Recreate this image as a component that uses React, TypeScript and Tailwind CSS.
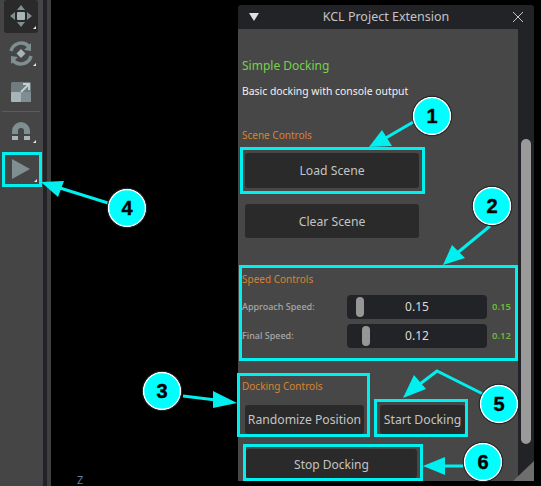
const font = { fontFamily: '"Noto Sans", "Open Sans", sans-serif' };

function Corner() {
  return <polygon points="29,29 32,29 32,26" fill="#e8e8e8" />;
}

function MoveIcon() {
  return (
    <svg width="34" height="33" viewBox="0 0 34 33">
      <rect x="13" y="12" width="8" height="8" rx="1" fill="#a6b5b7" />
      <polygon points="17,5 13,10 21,10" fill="#7f8e90" />
      <polygon points="17,27 13,22 21,22" fill="#7f8e90" />
      <polygon points="6,16 11,12 11,20" fill="#7f8e90" />
      <polygon points="28,16 23,12 23,20" fill="#7f8e90" />
      <Corner />
    </svg>
  );
}

function RotateIcon() {
  return (
    <svg width="34" height="33" viewBox="0 0 34 33">
      <path d="M7 14 A10.500 10.500 0 0 1 25 9.500" fill="none" stroke="#7f8e90" strokeWidth="3.500" />
      <polygon points="27,6 27,14 20,13" fill="#7f8e90" />
      <path d="M27 19 A10.500 10.500 0 0 1 9 23.500" fill="none" stroke="#7f8e90" strokeWidth="3.500" />
      <polygon points="7,27 7,19 14,20" fill="#7f8e90" />
      <polygon points="17,12 21.500,16.500 17,21 12.500,16.500" fill="#a6b5b7" />
      <Corner />
    </svg>
  );
}

function ScaleIcon() {
  return (
    <svg width="34" height="33" viewBox="0 0 34 33">
      <rect x="7" y="7" width="20" height="20" rx="1.500" fill="#6f7d80" />
      <rect x="7" y="17" width="10" height="10" rx="1" fill="#a6b5b7" />
      <rect x="17" y="17" width="10" height="10" fill="#7f8e90" />
      <path d="M17 17 L25 9 M19 9 H25 V15" fill="none" stroke="#c5d0d2" strokeWidth="1.800" />
    </svg>
  );
}

function MagnetIcon() {
  return (
    <svg width="34" height="33" viewBox="0 0 34 33">
      <path d="M8 20 V17 A9 9 0 0 1 26 17 V20 H20 V17 A3 3 0 0 0 14 17 V20 Z" fill="#7f8e90" />
      <rect x="8" y="22" width="6" height="4" fill="#a6b5b7" />
      <rect x="20" y="22" width="6" height="4" fill="#a6b5b7" />
      <Corner />
    </svg>
  );
}

function PlayIcon() {
  return (
    <svg width="34" height="29" viewBox="0 0 34 29">
      <polygon points="7,4 7,24 25,14" fill="#7f8e90" />
      <polygon points="29,27 32,27 32,24" fill="#e8e8e8" />
    </svg>
  );
}

function Toolbar() {
  return (
    <div className="flex flex-col w-[43px] shrink-0 bg-[#454545] pl-[4px]">
      <div className="w-[34px] h-[33px] rounded-[3px] bg-[#2a2a2a]">
        <MoveIcon />
      </div>
      <div className="mt-[4px] h-[33px]">
        <RotateIcon />
      </div>
      <div className="mt-[5px] h-[33px]">
        <ScaleIcon />
      </div>
      <div className="mt-[3px] -ml-[2px] w-[38px] h-px bg-[#5c5c5c]" />
      <div className="mt-[2px] h-[33px]">
        <MagnetIcon />
      </div>
      <div className="mt-[5px] -ml-[2px] w-[40px] h-[35px] border-[3px] border-[#00f0f0]">
        <PlayIcon />
      </div>
    </div>
  );
}

function DarkButton({ label, className }: { label: string; className: string }) {
  return (
    <div className={`flex items-center justify-center rounded-[3px] bg-[#2a2a2a] text-[#c4c4c4] ${className}`}>
      {label}
    </div>
  );
}

function SpeedRow({ label, value, handle }: { label: string; value: string; handle: string }) {
  return (
    <div className="flex items-center h-[24px]">
      <div className="w-[105px] text-[9px] font-medium text-[#a8a8a8]">{label}</div>
      <div className="relative flex items-center justify-center w-[140px] h-[24px] rounded-[4px] bg-[#222326] text-[12px] text-[#dcdcdc]">
        <div className={`absolute top-[2px] w-[8px] h-[20px] rounded-[4px] bg-[#969696] ${handle}`} />
        {value}
      </div>
      <div className="ml-[5px] text-[9.500px] font-semibold text-[#6cb83a]">{value}</div>
    </div>
  );
}

function Panel() {
  return (
    <div className="flex flex-col w-[296px] h-[476px] rounded-t-[3px] bg-[#222326]">
      <div className="relative flex items-center justify-center h-[24px] shrink-0 text-[12.500px] text-[#c4c4c4]">
        <svg className="absolute left-[11px] top-[8px]" width="10" height="8" viewBox="0 0 10 8">
          <polygon points="0,0 10,0 5,8" fill="#e0e0e0" />
        </svg>
        KCL Project Extension
        <svg className="absolute right-[11px] top-[7px]" width="10" height="10" viewBox="0 0 10 10">
          <path d="M0 0 L10 10 M10 0 L0 10" stroke="#c4c4c4" strokeWidth="1" />
        </svg>
      </div>
      <div className="relative flex flex-1">
        <div className="flex flex-col w-[280px] bg-[#474747]">
          <div className="mt-[28px] ml-[4px] h-[18px] leading-[18px] text-[12px] text-[#76d24a]">Simple Docking</div>
          <div className="mt-[9px] ml-[4px] h-[14px] leading-[14px] text-[10.400px] text-[#f2f2f2]">Basic docking with console output</div>
          <div className="mt-[30px] ml-[4px] h-[14px] leading-[14px] text-[10px] text-[#d9832e]">Scene Controls</div>
          <div className="mt-[5px] ml-[2px] w-[185px] h-[47px] border-[3px] border-[#00f0f0] pl-[2px] pt-[3px]">
            <DarkButton label="Load Scene" className="w-[174px] h-[35px] pt-[2px] text-[12.200px]" />
          </div>
          <DarkButton label="Clear Scene" className="mt-[10px] ml-[7px] w-[174px] h-[34px] pt-[3px] text-[12.200px]" />
          <div className="flex flex-col mt-[27px] ml-[1px] w-[279px] h-[96px] border-[3px] border-[#00f0f0]">
            <div className="mt-[4px] h-[14px] leading-[14px] text-[10px] text-[#d9832e]">Speed Controls</div>
            <div className="flex flex-col mt-[9px] gap-[5px]">
              <SpeedRow label="Approach Speed:" value="0.15" handle="left-[9px]" />
              <SpeedRow label="Final Speed:" value="0.12" handle="left-[15px]" />
            </div>
          </div>
          <div className="flex items-end mt-[12px] -ml-[1px]">
            <div className="flex flex-col w-[133px] h-[64px] border-[3px] border-[#00f0f0] pl-[5px]">
              <div className="mt-[3px] -ml-[3px] h-[14px] leading-[14px] text-[10px] text-[#d9832e]">Docking Controls</div>
              <DarkButton label="Randomize Position" className="mt-[12px] w-[119px] h-[29px] pt-[2px] text-[12.200px]" />
            </div>
            <div className="ml-[4px] w-[94px] h-[38px] border-[3px] border-[#00f0f0] pl-[3px] pt-[3px]">
              <DarkButton label="Start Docking" className="w-[85px] h-[29px] pt-[2px] text-[12.200px]" />
            </div>
          </div>
          <div className="mt-[7px] ml-[5px] w-[180px] h-[37px] border-[3px] border-[#00f0f0] pt-[2px]">
            <DarkButton label="Stop Docking" className="w-[171px] h-[29px] pt-[2px] text-[12px]" />
          </div>
        </div>
        <div className="flex-1 pl-[3px] pt-[110px]">
          <div className="w-[10px] h-[305px] rounded-[5px] bg-[#9a9a9a]" />
        </div>
        <svg className="absolute right-0 bottom-0" width="21" height="20" viewBox="0 0 21 20">
          <polygon points="21,0 21,20 0,20" fill="#6e6e6e" />
        </svg>
      </div>
    </div>
  );
}

function Callout({ n, x, y }: { n: string; x: number; y: number }) {
  return (
    <g>
      <circle cx={x} cy={y} r="18.500" fill="#00ffff" stroke="#ffffff" strokeWidth="1.500" />
      <circle cx={x} cy={y} r="19.800" fill="none" stroke="#222222" strokeWidth="1" />
      <text
        x={x}
        y={y + 7}
        textAnchor="middle"
        fontSize="20"
        fontWeight="700"
        fill="#000000"
        stroke="#000000"
        strokeWidth="0.400"
        fontFamily='"Liberation Sans", sans-serif'
      >
        {n}
      </text>
    </g>
  );
}

function Annotations() {
  return (
    <svg className="absolute left-0 top-0" width="541" height="486" viewBox="0 0 541 486">
      <g stroke="#00f0f0" strokeWidth="3" fill="none">
        <path d="M415 121 L384 139" />
        <path d="M490 226 L456 254" />
        <path d="M183 396 L216 400" />
        <path d="M108 203 L60 188" />
        <path d="M483 394 L437 371 L416 387" />
        <path d="M463 466 L441 466" />
      </g>
      <g fill="#00f0f0">
        <polygon points="369,147 392,146 382,130" />
        <polygon points="443,265 465,258 452,245" />
        <polygon points="237,403 213,391 213,408" />
        <polygon points="41,182 58,197 64,181" />
        <polygon points="403,398 426,389 414,375" />
        <polygon points="423,466 445,457 445,475" />
      </g>
      <Callout n="1" x={432} y={116} />
      <Callout n="2" x={492} y={206} />
      <Callout n="3" x={162} y={391} />
      <Callout n="4" x={127} y={208} />
      <Callout n="5" x={499} y={404} />
      <Callout n="6" x={483} y={462} />
    </svg>
  );
}

export default function App() {
  return (
    <div className="relative flex w-[541px] h-[486px] overflow-hidden bg-black" style={font}>
      <Toolbar />
      <div className="w-[4px] shrink-0 bg-[#222326]" />
      <div className="w-[4px] shrink-0 bg-[#3f3f3f]" />
      <div className="relative flex-1 pl-[187px] pt-[5px]">
        <Panel />
        <div className="absolute left-[26px] bottom-0 text-[11px] leading-[13px] text-[#5f7f9f]">Z</div>
      </div>
      <Annotations />
    </div>
  );
}
